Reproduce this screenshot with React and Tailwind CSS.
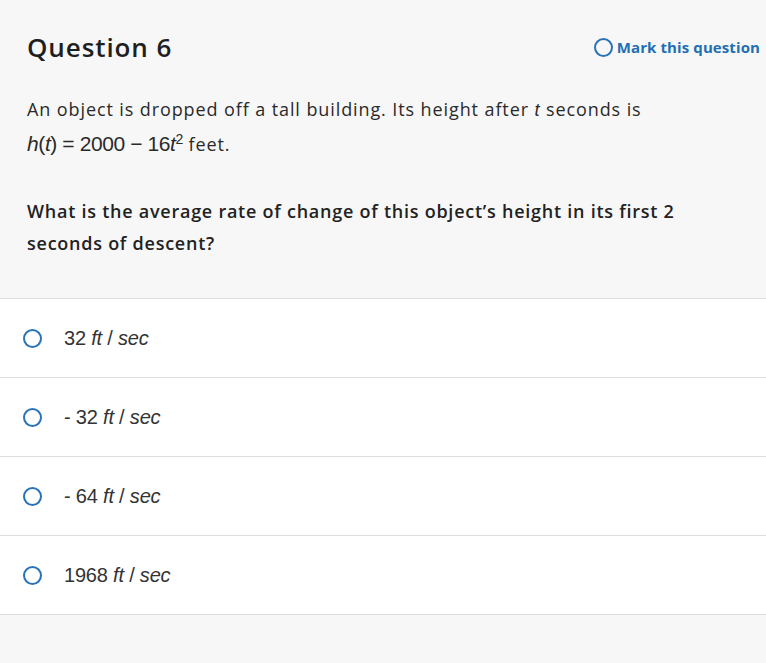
import React, { useState } from 'react';

const options = [
  { id: 'a', value: '32' },
  { id: 'b', value: '- 32' },
  { id: 'c', value: '- 64' },
  { id: 'd', value: '1968' },
];

function Radio({ className = '' }) {
  return <span className={`inline-block rounded-full border-2 border-[#2a73b8] ${className}`} />;
}

export default function App() {
  const [picked, setPicked] = useState(null);

  return (
    <div className="min-h-[663px] bg-[#f7f7f7] text-[#222] font-['Open_Sans',sans-serif]">
      {/* 문제 헤더 */}
      <div className="px-[27px] pt-[30px] pb-[39px]">
        <div className="flex items-center justify-between">
          <h1 className="text-[26px] font-semibold leading-[34px] tracking-[0.9px] text-[#1f1f1f]">Question 6</h1>
          <button className="flex items-center gap-[4px] -mr-[21px] text-[15px] font-bold tracking-[0.1px] text-[#1f6fb2]">
            <Radio className="w-[19px] h-[19px]" />
            Mark this question
          </button>
        </div>

        <p className="mt-[28px] text-[18px] leading-[34px] tracking-[0.9px] text-[#2a2a2a]">
          An object is dropped off a tall building. Its height after <i className="font-['Liberation_Sans',sans-serif]">t</i> seconds is
          <br />
          <span className="font-['Liberation_Sans',sans-serif] text-[21px] tracking-[-0.4px]">
            <i>h</i>(<i>t</i>) = 2000 − 16<i>t</i><sup className="text-[14px]">2</sup>
          </span>{' '}
          feet.
        </p>

        <p className="mt-[34px] text-[18px] font-semibold leading-[32px] tracking-[0.75px] text-[#222]">
          What is the average rate of change of this object’s height in its first 2 seconds of descent?
        </p>
      </div>

      {/* 보기 */}
      <div className="bg-white border-t border-[#dedede]">
        {options.map((o) => (
          <button
            key={o.id}
            onClick={() => setPicked(o.id)}
            className="w-full h-[79px] flex items-center border-b border-[#dedede] text-left"
          >
            <span className="w-[64px] flex items-center pl-[23px]">
              <Radio className={`w-[19px] h-[19px] ${picked === o.id ? 'bg-[#2a73b8]' : ''}`} />
            </span>
            <span className="text-[20px] text-[#333] font-['Liberation_Sans',sans-serif] tracking-[-0.2px]">
              {o.value} <i>ft</i> / <i>sec</i>
            </span>
          </button>
        ))}
      </div>
    </div>
  );
}
